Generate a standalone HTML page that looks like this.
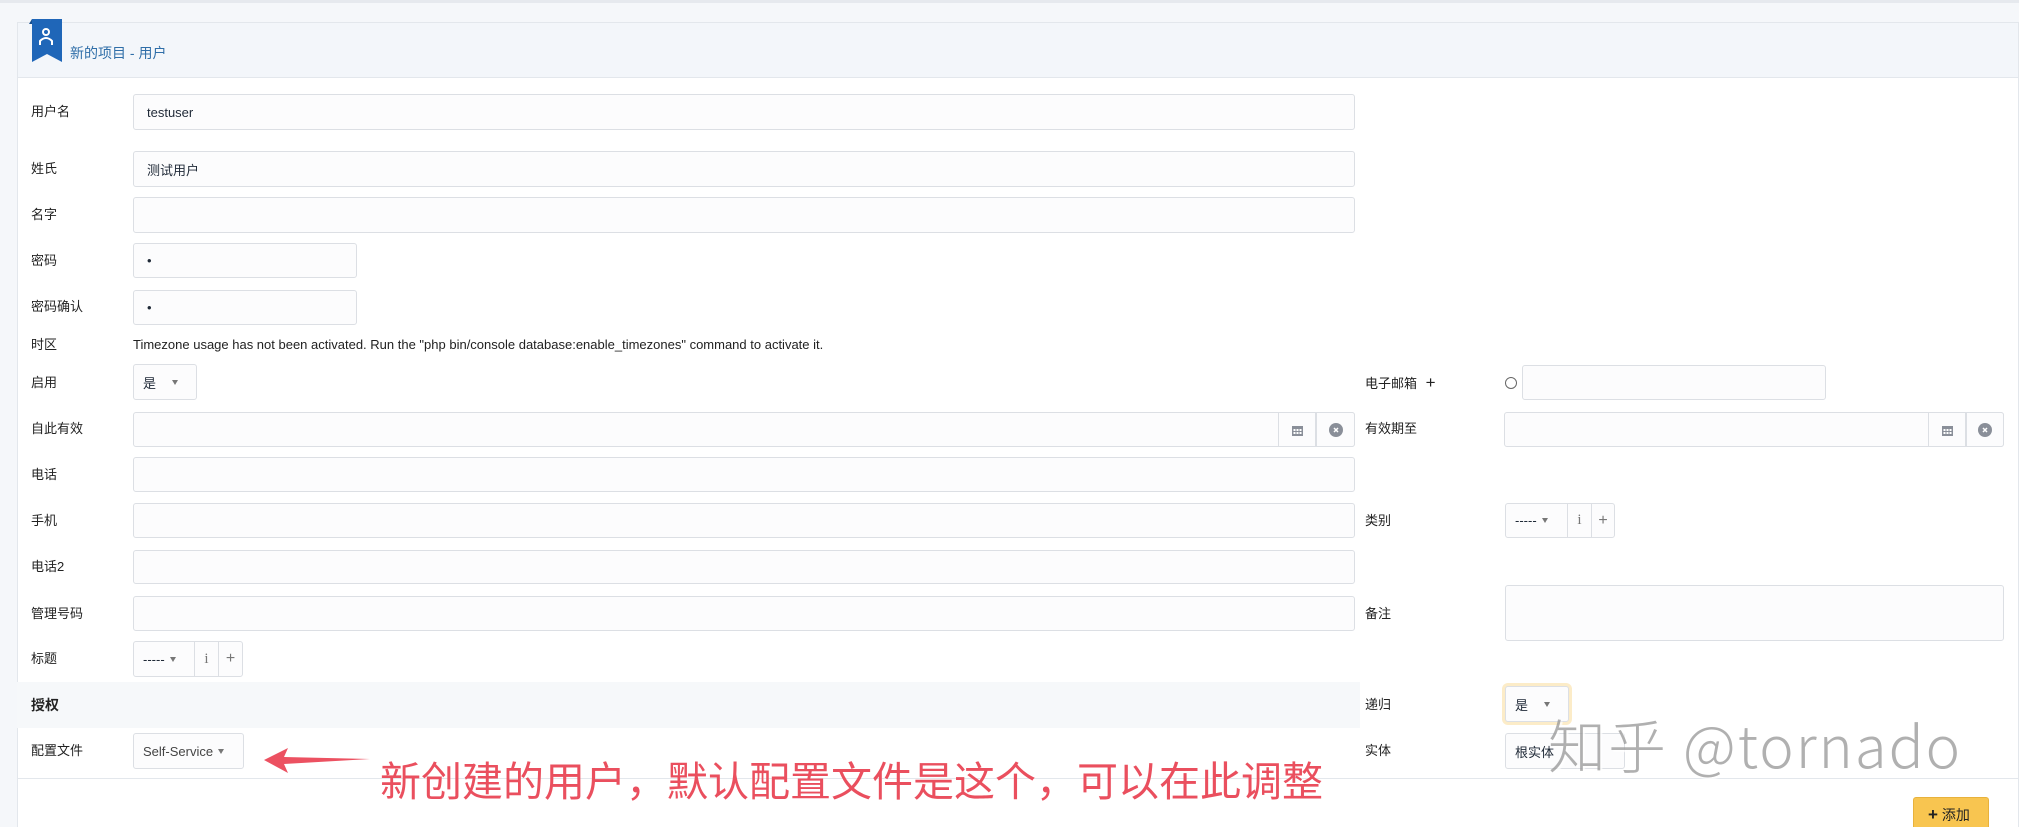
<!DOCTYPE html>
<html style="width:2019px;height:827px;overflow:hidden"><head><meta charset="utf-8"><style>
*{box-sizing:border-box;margin:0;padding:0}
body{width:2019px;height:827px;overflow:hidden;background:#f5f7fa;font-family:"Liberation Sans","Noto Sans CJK SC",sans-serif;font-size:13px;color:#1f2937;position:relative}
.a{position:absolute}
.card{left:17px;top:22px;width:2002px;height:805px;background:#fff;border:1px solid #e3e7ec;border-bottom:none}
.hdr{left:17px;top:22px;width:2002px;height:56px;background:#f3f6fa;border:1px solid #e3e7ec}
.lbl{position:absolute;font-size:13px;color:#222;line-height:16px}
.in{position:absolute;background:#fcfcfd;border:1px solid #dcdfe4;border-radius:3px;font-size:13px;padding-left:13px;display:flex;align-items:center}
.btn{position:absolute;border:1px solid #dcdfe4;display:flex;align-items:center;justify-content:center;color:#777;background:#fcfcfd}
.caret{display:inline-block;width:0;height:0;border-left:3.5px solid transparent;border-right:3.5px solid transparent;border-top:5px solid #777;margin-left:10px}
</style></head><body>
<div class="a" style="left:0;top:0;width:2019px;height:3px;background:#e6e9ee"></div>
<div class="a card"></div>
<div class="a hdr"></div>
<svg class="a" style="left:29px;top:19px" width="33" height="43" viewBox="0 0 33 43"><path d="M3 0H33V43L18 35L3 43Z" fill="#1f66b8"/><path d="M0 5L3 0V5Z" fill="#174f90"/><circle cx="17" cy="13" r="3" fill="none" stroke="#fff" stroke-width="2"/><path d="M11 26V22Q17 16 23 22V26" fill="none" stroke="#fff" stroke-width="2"/></svg>
<div class="a" style="left:70px;top:43px;font-size:14px;color:#2f6ea8">新的项目 - 用户</div>

<div class="lbl" style="left:31px;top:104px">用户名</div>
<div class="in" style="left:133px;top:94px;width:1222px;height:36px">testuser</div>
<div class="lbl" style="left:31px;top:161px">姓氏</div>
<div class="in" style="left:133px;top:151px;width:1222px;height:36px">测试用户</div>
<div class="lbl" style="left:31px;top:207px">名字</div>
<div class="in" style="left:133px;top:197px;width:1222px;height:36px"></div>
<div class="lbl" style="left:31px;top:253px">密码</div>
<div class="in" style="left:133px;top:243px;width:224px;height:35px">•</div>
<div class="lbl" style="left:31px;top:299px">密码确认</div>
<div class="in" style="left:133px;top:290px;width:224px;height:35px">•</div>
<div class="lbl" style="left:31px;top:337px">时区</div>
<div class="lbl" style="left:133px;top:337px">Timezone usage has not been activated. Run the "php bin/console database:enable_timezones" command to activate it.</div>
<div class="lbl" style="left:31px;top:375px">启用</div>
<div class="in" style="left:133px;top:364px;width:64px;height:36px;padding-left:9px">是<span class="caret" style="margin-left:16px"></span></div>

<div class="lbl" style="left:31px;top:421px">自此有效</div>
<div class="in" style="left:133px;top:412px;width:1222px;height:35px"></div>
<div class="btn" style="left:1278px;top:412px;width:38px;height:35px"><svg width="11" height="12"><rect x="0" y="2" width="11" height="10" fill="#8a8f99"/><g fill="#fff"><rect x="1.5" y="5" width="2" height="2"/><rect x="4.5" y="5" width="2" height="2"/><rect x="7.5" y="5" width="2" height="2"/><rect x="1.5" y="8" width="2" height="2"/><rect x="4.5" y="8" width="2" height="2"/><rect x="7.5" y="8" width="2" height="2"/></g></svg></div>
<div class="btn" style="left:1316px;top:412px;width:39px;height:35px;border-radius:0 3px 3px 0"><svg width="14" height="14"><circle cx="7" cy="7" r="7" fill="#8a8f99"/><path d="M5 5L9 9M9 5L5 9" stroke="#fff" stroke-width="1.5"/></svg></div>

<div class="lbl" style="left:31px;top:467px">电话</div>
<div class="in" style="left:133px;top:457px;width:1222px;height:35px"></div>
<div class="lbl" style="left:31px;top:513px">手机</div>
<div class="in" style="left:133px;top:503px;width:1222px;height:35px"></div>
<div class="lbl" style="left:31px;top:559px">电话2</div>
<div class="in" style="left:133px;top:550px;width:1222px;height:34px"></div>
<div class="lbl" style="left:31px;top:606px">管理号码</div>
<div class="in" style="left:133px;top:596px;width:1222px;height:35px"></div>
<div class="lbl" style="left:31px;top:651px">标题</div>
<div class="in" style="left:133px;top:641px;width:62px;height:36px;padding-left:9px;border-radius:3px 0 0 3px">-----<span class="caret" style="margin-left:5px"></span></div>
<div class="btn" style="left:194px;top:641px;width:25px;height:36px;font-family:'Liberation Serif',serif;font-size:15px">i</div>
<div class="btn" style="left:218px;top:641px;width:25px;height:36px;font-size:16px;border-radius:0 3px 3px 0">+</div>

<div class="a" style="left:17px;top:682px;width:1343px;height:46px;background:#f6f8fa"></div>
<div class="lbl" style="left:31px;top:697px;font-weight:bold;font-size:14px">授权</div>
<div class="lbl" style="left:31px;top:743px">配置文件</div>
<div class="in" style="left:133px;top:733px;width:111px;height:36px;padding-left:9px;color:#444">Self-Service<span class="caret" style="margin-left:5px"></span></div>

<div class="lbl" style="left:1365px;top:375px">电子邮箱 <span style="font-size:17px;margin-left:5px">+</span></div>
<div class="a" style="left:1505px;top:377px;width:12px;height:12px;border:1px solid #666;border-radius:50%"></div>
<div class="in" style="left:1522px;top:365px;width:304px;height:35px"></div>
<div class="lbl" style="left:1365px;top:421px">有效期至</div>
<div class="in" style="left:1504px;top:412px;width:500px;height:35px"></div>
<div class="btn" style="left:1928px;top:412px;width:38px;height:35px"><svg width="11" height="12"><rect x="0" y="2" width="11" height="10" fill="#8a8f99"/><g fill="#fff"><rect x="1.5" y="5" width="2" height="2"/><rect x="4.5" y="5" width="2" height="2"/><rect x="7.5" y="5" width="2" height="2"/><rect x="1.5" y="8" width="2" height="2"/><rect x="4.5" y="8" width="2" height="2"/><rect x="7.5" y="8" width="2" height="2"/></g></svg></div>
<div class="btn" style="left:1966px;top:412px;width:38px;height:35px;border-radius:0 3px 3px 0"><svg width="14" height="14"><circle cx="7" cy="7" r="7" fill="#8a8f99"/><path d="M5 5L9 9M9 5L5 9" stroke="#fff" stroke-width="1.5"/></svg></div>
<div class="lbl" style="left:1365px;top:513px">类别</div>
<div class="in" style="left:1505px;top:503px;width:63px;height:35px;padding-left:9px;border-radius:3px 0 0 3px">-----<span class="caret" style="margin-left:5px"></span></div>
<div class="btn" style="left:1567px;top:503px;width:25px;height:35px;font-family:'Liberation Serif',serif;font-size:15px">i</div>
<div class="btn" style="left:1591px;top:503px;width:24px;height:35px;font-size:16px;border-radius:0 3px 3px 0">+</div>
<div class="lbl" style="left:1365px;top:606px">备注</div>
<div class="in" style="left:1505px;top:585px;width:499px;height:56px"></div>
<div class="lbl" style="left:1365px;top:697px">递归</div>
<div class="in" style="left:1505px;top:686px;width:64px;height:36px;padding-left:9px;box-shadow:0 0 0 3px #fcecc8">是<span class="caret" style="margin-left:16px"></span></div>
<div class="lbl" style="left:1365px;top:743px">实体</div>
<div class="in" style="left:1505px;top:733px;width:120px;height:36px;padding-left:9px">根实体</div>

<div class="a" style="left:17px;top:778px;width:2002px;height:1px;background:#e3e7ec"></div>
<div class="a" style="left:1913px;top:797px;width:76px;height:30px;background:#f8c550;border:1px solid #e8b23c;border-bottom:none;border-radius:3px 3px 0 0;font-size:14px;padding:7px 0 0 14px;color:#222;overflow:hidden"><b style="font-size:17px">+</b> 添加</div>

<svg class="a" style="left:262px;top:745px" width="110" height="30"><path d="M2 15L26 3L22 12L108 14L22 19L26 28Z" fill="#ec5161"/></svg>
<div class="a" style="left:380px;top:754px;font-size:41px;color:#ea4f5e;font-family:'Noto Sans CJK SC',sans-serif;line-height:48px">新创建的用户，默认配置文件是这个，可以在此调整</div>
<div class="a" style="left:1548px;top:708px;font-size:58px;color:rgba(150,150,150,.75);font-family:'Noto Sans CJK SC',sans-serif;font-weight:300;line-height:70px;text-shadow:2px 2px 1px rgba(255,255,255,.8);letter-spacing:2px">知乎 @tornado</div>
</body></html>
